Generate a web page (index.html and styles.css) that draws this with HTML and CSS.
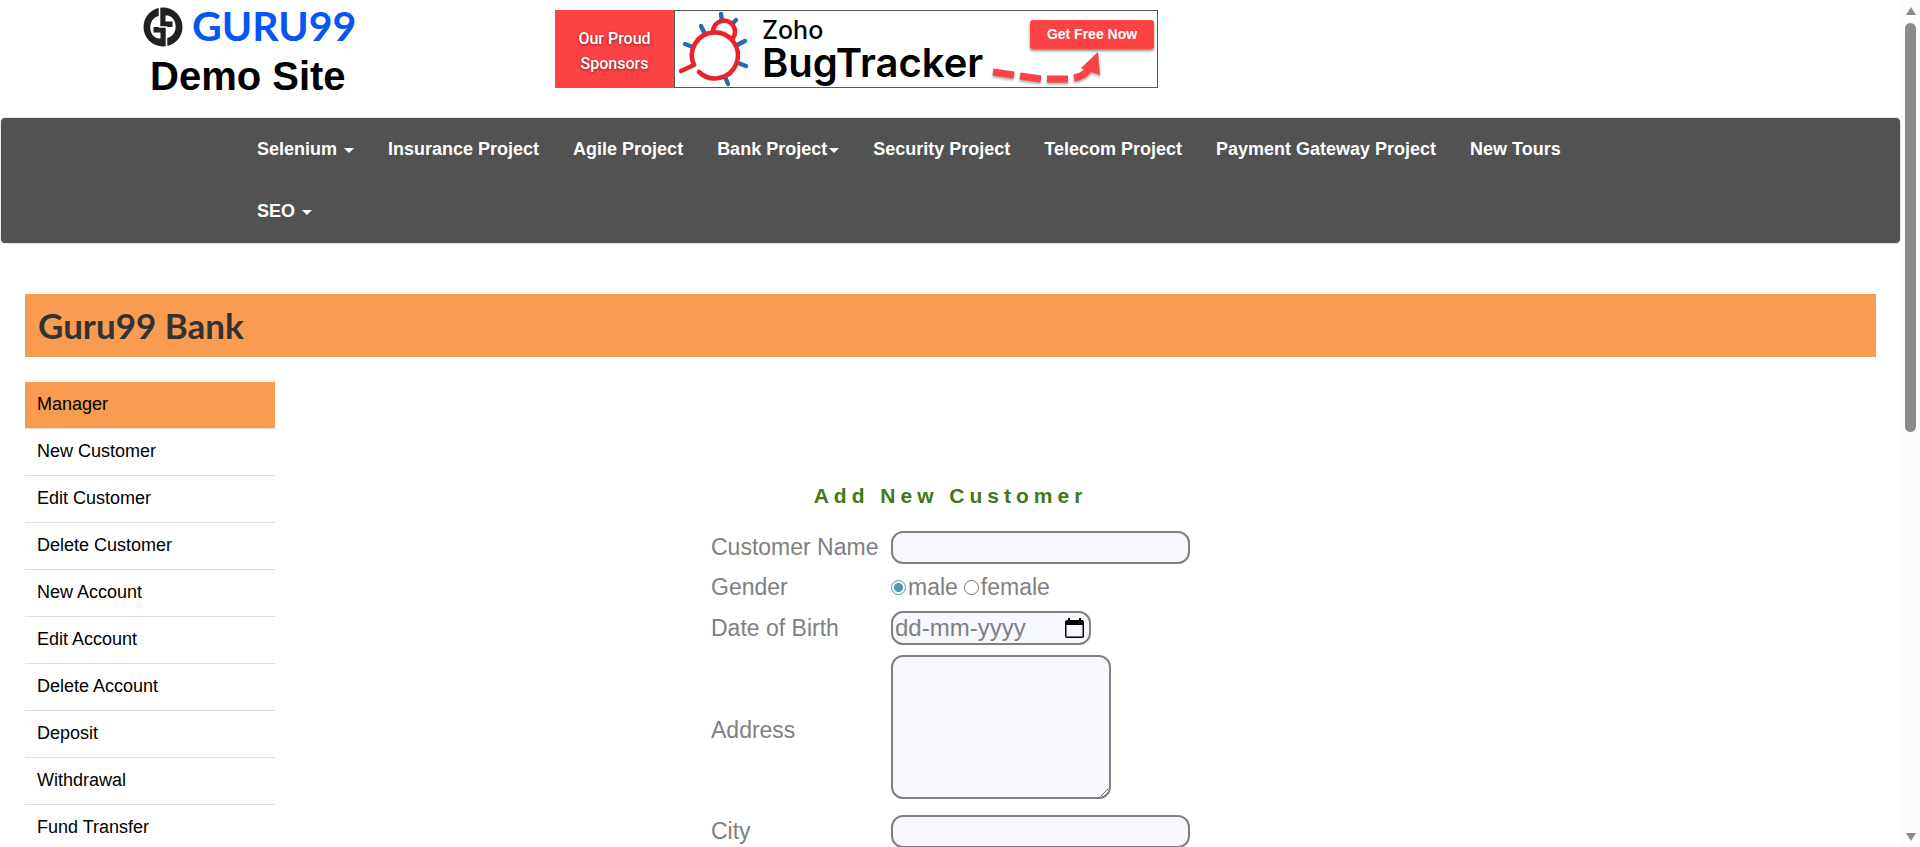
FILE: index.html
```html
<!DOCTYPE html>
<html lang="en">
<head>
<meta charset="utf-8">
<title>Guru99 Bank New Customer Entry Page</title>
<link rel="stylesheet" href="styles.css">
</head>
<body>
<div class="page">
  <header class="header">
    <div class="brand">
      <div class="logo">
        <svg class="logo-mark" viewBox="0 0 40 40" aria-hidden="true">
          <circle cx="20" cy="20" r="19.500" fill="#231f20"/>
          <path d="M16 9C4.500 11 4.500 29.500 15.500 31.500h2V25.500H10.500v-5.500H16z" fill="#fff"/>
          <path d="M24 31C35.500 29 35.500 10.500 24.500 8.500h-2v6h7v5.500H24z" fill="#fff"/>
          <path d="M16.500 0v20h7v20" fill="none" stroke="#fff" stroke-width="1.600"/>
        </svg>
        <span class="logo-text">GURU99</span>
      </div>
      <h2 class="brand-title">Demo Site</h2>
    </div>
    <a class="banner" href="#">
      <span class="banner-sponsor">Our Proud<br>Sponsors</span>
      <span class="banner-body">
        <svg class="bug" viewBox="0 0 76 76" aria-hidden="true">
          <g stroke="#1f6db5" stroke-width="4.400" stroke-linecap="round">
            <path d="M46 3l1 7M61 9l-4 4M26 15l4 8M10 33l8 3M70 30l-8 4M71 55l-8-3M53 73l-3-7"/>
          </g>
          <g fill="none" stroke="#e8232a" stroke-width="4.600" stroke-linecap="round" stroke-linejoin="round">
            <path d="M6 60l13-6a23 23 0 1 1 5 7"/>
            <path d="M38 21a11 11 0 1 1 20 6"/>
          </g>
        </svg>
        <span class="banner-name"><span class="zoho">Zoho</span><span class="tracker">BugTracker</span></span>
        <span class="banner-cta">
          <span class="cta-button">Get Free Now</span>
          <svg class="arrow" viewBox="0 0 170 37" aria-hidden="true">
            <g fill="none" stroke="#fd4244" stroke-width="7">
              <path d="M6 23l21 3M33 27l21 3M60 30h21M87 29q12-2 18-13"/>
            </g>
            <path d="M111 3L94 19l19 7z" fill="#fd4244"/>
          </svg>
        </span>
      </span>
    </a>
  </header>

  <nav class="nav">
    <ul class="nav-list">
      <li><a href="#">Selenium <b class="caret"></b></a></li>
      <li><a href="#">Insurance Project</a></li>
      <li><a href="#">Agile Project</a></li>
      <li><a href="#">Bank Project<b class="caret"></b></a></li>
      <li><a href="#">Security Project</a></li>
      <li><a href="#">Telecom Project</a></li>
      <li><a href="#">Payment Gateway Project</a></li>
      <li><a href="#">New Tours</a></li>
      <li><a href="#">SEO <b class="caret"></b></a></li>
    </ul>
  </nav>

  <div class="bank-bar"><h1 class="bank-name">Guru99 Bank</h1></div>

  <main class="main">
    <ul class="menu">
      <li><a class="active" href="#">Manager</a></li>
      <li><a href="#">New Customer</a></li>
      <li><a href="#">Edit Customer</a></li>
      <li><a href="#">Delete Customer</a></li>
      <li><a href="#">New Account</a></li>
      <li><a href="#">Edit Account</a></li>
      <li><a href="#">Delete Account</a></li>
      <li><a href="#">Deposit</a></li>
      <li><a href="#">Withdrawal</a></li>
      <li><a href="#">Fund Transfer</a></li>
    </ul>
    <form class="form">
      <p class="form-title">Add New Customer</p>
      <table class="fields">
        <tr>
          <td><label for="name">Customer Name</label></td>
          <td><input class="field" type="text" id="name"></td>
        </tr>
        <tr>
          <td>Gender</td>
          <td>
            <div class="radios">
              <label class="choice"><input class="radio" type="radio" name="gender" checked>male</label>
              <label class="choice"><input class="radio" type="radio" name="gender">female</label>
            </div>
          </td>
        </tr>
        <tr>
          <td><label for="dob">Date of Birth</label></td>
          <td>
            <div class="date">
              <input class="date-input" type="text" id="dob" placeholder="dd-mm-yyyy">
              <button class="date-button" type="button" aria-label="Show date picker">
                <svg class="calendar" viewBox="0 0 19 20" aria-hidden="true">
                  <path d="M2 2h1V0h2v2h9V0h2v2h1q2 0 2 2v14q0 2-2 2H2q-2 0-2-2V4q0-2 2-2zM1.500 7v11.500h16V7z" fill="#000" fill-rule="evenodd"/>
                </svg>
              </button>
            </div>
          </td>
        </tr>
        <tr>
          <td><label for="address">Address</label></td>
          <td><textarea class="area" id="address"></textarea></td>
        </tr>
        <tr>
          <td><label for="city">City</label></td>
          <td><input class="field" type="text" id="city"></td>
        </tr>
      </table>
    </form>
  </main>
</div>
<div class="scrollbar" aria-hidden="true">
  <svg class="scroll-arrow" viewBox="0 0 12 10"><path d="M6 1L11 9H1z"/></svg>
  <div class="track"><div class="thumb"></div></div>
  <svg class="scroll-arrow" viewBox="0 0 12 10"><path d="M6 9L1 1h10z"/></svg>
</div>
</body>
</html>
```

FILE: styles.css
```css
* { box-sizing: border-box; }

body {
  margin: 0;
  display: flex;
  height: 100vh;
  overflow: hidden;
  background: #fff;
  font-family: "Liberation Sans", Arial, sans-serif;
  font-size: 18px;
  color: #000;
}

a { color: inherit; text-decoration: none; }
ul { margin: 0; padding: 0; list-style: none; }

.page { flex: 1; min-width: 0; overflow: hidden; }

/* Header */
.header { display: flex; padding: 7px 0 0 143px; height: 117px; }
.brand { width: 412px; }
.logo { display: flex; gap: 9px; height: 40px; }
.logo-mark { width: 40px; height: 40px; }
.logo-text {
  font-family: Lato, sans-serif;
  font-size: 41px;
  font-weight: 700;
  line-height: 38px;
  color: #0556f3;
}
.brand-title { margin: 6px 0 0 7px; font-size: 40px; line-height: 46px; }

.banner { display: flex; width: 603px; height: 78px; margin-top: 3px; }
.banner-sponsor {
  display: flex;
  align-items: center;
  justify-content: center;
  width: 119px;
  padding-top: 4px;
  background: #fd4244;
  color: #fff;
  font-family: Roboto, sans-serif;
  font-size: 16px;
  font-weight: 500;
  line-height: 25px;
  text-align: center;
  text-shadow: 0 1px 3px #8a2020;
}
.banner-body { display: flex; flex: 1; border: 1px solid #58585a; }
.bug { width: 76px; height: 76px; }
.banner-name { display: flex; flex-direction: column; width: 232px; padding: 4px 0 0 11px; font-family: Inter, sans-serif; }
.zoho { font-size: 25px; font-weight: 500; line-height: 30px; }
.tracker { font-size: 40px; font-weight: 600; line-height: 36px; }
.banner-cta { display: flex; flex: 1; flex-direction: column; align-items: flex-end; padding-top: 9px; }
.cta-button {
  width: 124px;
  margin-right: 3px;
  border-radius: 3px;
  background: #fd4244;
  box-shadow: 0 2px 3px #888;
  color: #fff;
  font-size: 14px;
  font-weight: 700;
  line-height: 29px;
  text-align: center;
}
.arrow { width: 170px; height: 37px; filter: drop-shadow(0 2px 1px #aaa); }

/* Navigation */
.nav {
  padding: 0 260px 1px 239px;
  border: 1px solid #e7e7e7;
  border-radius: 5px;
  background: #525252;
}
.nav-list { display: flex; flex-wrap: wrap; }
.nav-list a {
  display: block;
  padding: 0 17px;
  color: #fff;
  font-weight: 700;
  line-height: 62px;
}
.caret {
  display: inline-block;
  margin-left: 2px;
  vertical-align: middle;
  border-top: 5px solid #fff;
  border-right: 5px solid transparent;
  border-left: 5px solid transparent;
}

/* Bank title */
.bank-bar { margin: 50px 25px 25px; padding: 0 13px; background: #f99b50; }
.bank-name {
  margin: 0;
  font-family: Lato, sans-serif;
  font-size: 35px;
  line-height: 63px;
  color: #333;
}

/* Content */
.main { display: grid; grid-template-columns: 250px 1fr 250px; padding: 0 25px; }
.menu a { display: block; padding: 10px 12px 12px; border-bottom: 1px solid #ddd; line-height: 24px; }
.menu .active { background: #f99b50; }

.form { display: flex; flex-direction: column; align-items: center; padding-top: 100px; color: #808080; }
.form-title {
  margin: 0 0 17px;
  font-size: 21px;
  font-weight: 700;
  line-height: 28px;
  letter-spacing: 5px;
  color: #44761a;
}
.fields { border-collapse: collapse; font-size: 23px; }
.fields td { height: 40px; padding: 0; }
.fields td:first-child { width: 180px; }
.field, .date, .area {
  display: block;
  border: 2px solid #808080;
  border-radius: 12px;
  background: #f8f8ff;
}
.field { width: 299px; height: 33px; padding: 0 6px; font: inherit; }
.radios { display: flex; gap: 6px; }
.choice { display: flex; align-items: center; gap: 2px; }
.radio { width: 15px; height: 15px; margin: 0; accent-color: #4799ab; }
.date { display: flex; align-items: center; width: 200px; height: 34px; margin: 4px 0; padding: 0 5px 0 2px; }
.date-input { flex: 1; min-width: 0; padding: 0; border: 0; background: none; font: inherit; font-size: 24px; }
.date-input::placeholder { color: #808080; }
.date-button { display: flex; padding: 0; border: 0; background: none; }
.calendar { width: 19px; height: 20px; }
.area { width: 220px; height: 144px; margin: 6px 0 12px; padding: 4px; font: inherit; }

/* Scrollbar */
.scrollbar { display: flex; flex-direction: column; align-items: center; width: 19px; padding: 6px 0 5px; background: #fcfcfc; fill: #8b8b8b; }
.scroll-arrow { width: 12px; height: 10px; }
.track { flex: 1; padding: 7px 0; }
.thumb { width: 11px; height: 51%; border-radius: 6px; background: #8b8b8b; }
```
